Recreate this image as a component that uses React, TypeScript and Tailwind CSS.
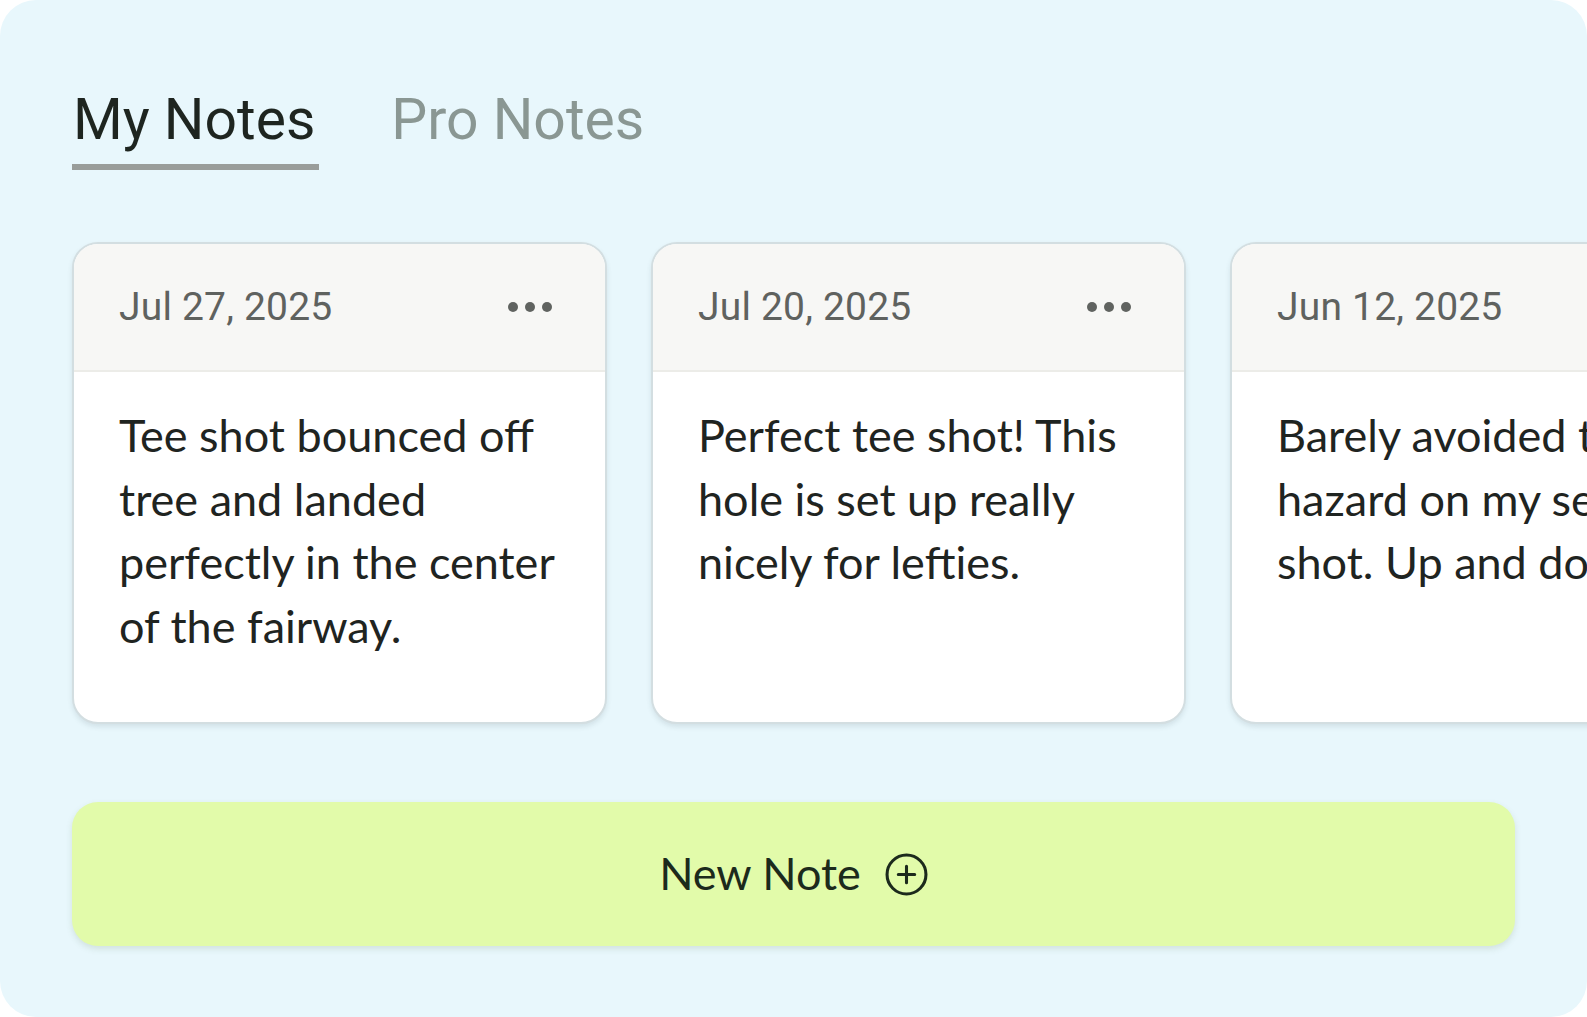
import React from 'react';

type Note = { date: string; lines: string[] };

const notes: Note[] = [
  { date: 'Jul 27, 2025', lines: ['Tee shot bounced off', 'tree and landed', 'perfectly in the center', 'of the fairway.'] },
  { date: 'Jul 20, 2025', lines: ['Perfect tee shot! This', 'hole is set up really', 'nicely for lefties.'] },
  { date: 'Jun 12, 2025', lines: ['Barely avoided the water', 'hazard on my second', 'shot. Up and down for par.'] },
];

const NoteCard: React.FC<{ note: Note }> = ({ note }) => (
  <div className="w-[535px] h-[482px] shrink-0 rounded-[26px] border-2 border-[#d3dee1] bg-white overflow-hidden shadow-[0_3px_5px_rgba(60,80,90,0.12)] flex flex-col">
    <div className="h-[128px] shrink-0 bg-[#f7f7f5] border-b-2 border-[#ecece8] flex items-center justify-between pl-[45px] pr-[53px]">
      <span className="font-['Roboto',sans-serif] text-[39px] text-[#5f625f] tracking-[0.2px]">{note.date}</span>
      <div className="flex gap-[7px]">
        <span className="w-[10px] h-[10px] rounded-full bg-[#606360]" />
        <span className="w-[10px] h-[10px] rounded-full bg-[#606360]" />
        <span className="w-[10px] h-[10px] rounded-full bg-[#606360]" />
      </div>
    </div>
    <div className="pl-[45px] pt-[32px] font-['Lato',sans-serif] text-[45px] leading-[63.5px] text-[#1f2421] whitespace-nowrap">
      {note.lines.map((l) => (
        <div key={l}>{l}</div>
      ))}
    </div>
  </div>
);

export default function App() {
  return (
    <div className="w-[1587px] h-[1017px] bg-white overflow-hidden">
      <div className="h-full rounded-[36px] bg-[#e8f7fc] px-[72px] pt-[88px] overflow-hidden">
        <div className="flex gap-[72px] font-['Roboto',sans-serif] text-[57px] leading-[64px]">
          <div className="border-b-[6px] border-[#999d9a] pb-[12px] pl-[1px] pr-[4px] text-[#1e2520]">My Notes</div>
          <div className="pb-[18px] text-[#8a9793]">Pro Notes</div>
        </div>
        <div className="flex gap-[44px] mt-[72px] w-[1800px]">
          {notes.map((n) => (
            <NoteCard key={n.date} note={n} />
          ))}
        </div>
        <button className="mt-[78px] w-full h-[144px] rounded-[26px] bg-[#e2fbaa] shadow-[0_3px_6px_rgba(80,110,60,0.15)] flex items-center justify-center gap-[24px]">
          <span className="font-['Lato',sans-serif] text-[45px] text-[#1c2a1c]">New Note</span>
          <svg width="43" height="43" viewBox="0 0 42 42" fill="none" stroke="#1c2a1c" strokeWidth="3" strokeLinecap="round">
            <circle cx="21" cy="21" r="19" />
            <path d="M21 13v16M13 21h16" />
          </svg>
        </button>
      </div>
    </div>
  );
}
